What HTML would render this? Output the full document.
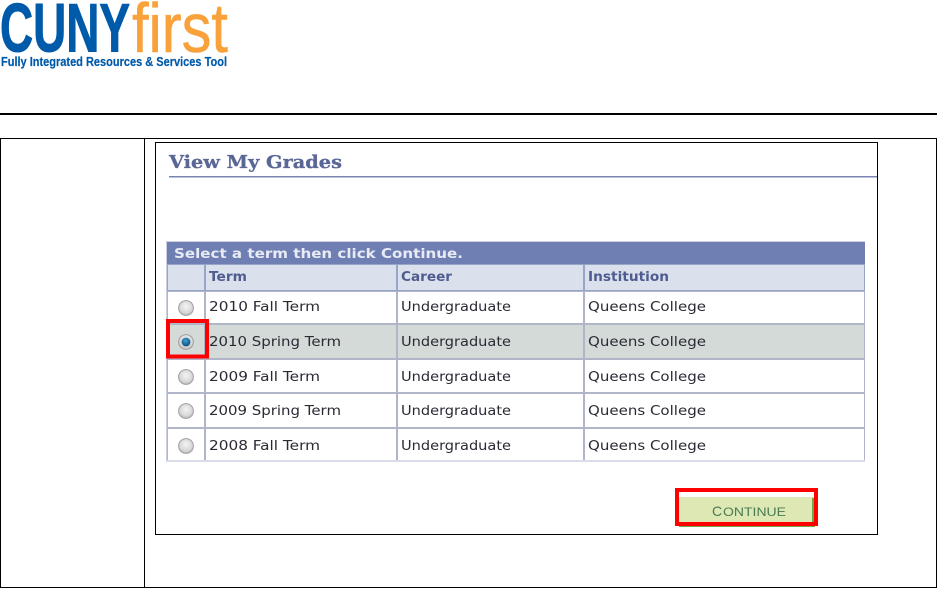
<!DOCTYPE html>
<html><head><meta charset="utf-8"><style>
html,body{margin:0;padding:0;background:#fff;width:937px;height:589px;overflow:hidden}
svg{display:block}
.c{font-family:"DejaVu Sans",sans-serif;font-size:13px;fill:#2a2a35}
.h{font-family:"DejaVu Sans",sans-serif;font-size:13px;font-weight:bold;fill:#4f5b8f}
</style></head><body>
<svg width="937" height="589" viewBox="0 0 937 589" xmlns="http://www.w3.org/2000/svg">
<defs>
<radialGradient id="r" cx="50%" cy="40%" r="60%"><stop offset="0" stop-color="#f4f4f4"/><stop offset="0.7" stop-color="#d8d8d8"/><stop offset="1" stop-color="#b8b8b8"/></radialGradient>
<radialGradient id="b" cx="45%" cy="35%" r="65%"><stop offset="0" stop-color="#3f9fd0"/><stop offset="1" stop-color="#0a4d80"/></radialGradient>
<filter id="s" x="-5%" y="-5%" width="110%" height="110%"><feGaussianBlur stdDeviation="0.3"/></filter>
</defs>
<!-- logo -->
<text x="0" y="51.5" font-family="Liberation Sans" font-weight="bold" font-size="69" fill="#005aaa" stroke="#005aaa" stroke-width="1" textLength="130" lengthAdjust="spacingAndGlyphs">CUNY</text>
<text x="132" y="52" font-family="Liberation Sans" font-size="70" fill="#f9a13a" stroke="#f9a13a" stroke-width="0.5" textLength="96" lengthAdjust="spacingAndGlyphs">first</text>
<text x="1" y="66" font-family="Liberation Sans" font-weight="bold" font-size="12.5" fill="#005aaa" stroke="#005aaa" stroke-width="0.2" textLength="226" lengthAdjust="spacingAndGlyphs">Fully Integrated Resources &amp; Services Tool</text>
<!-- rule -->
<rect x="0" y="113" width="937" height="2" fill="#000"/>
<!-- outer table -->
<rect x="0.5" y="138.5" width="936" height="449" fill="none" stroke="#000"/>
<rect x="144" y="138" width="1" height="450" fill="#000"/>
<!-- inner frame -->
<rect x="155.5" y="142.5" width="722" height="392" fill="none" stroke="#000"/>
<!-- title -->
<text x="169" y="168" font-family="DejaVu Serif,Liberation Serif,serif" font-weight="bold" font-size="18" fill="#5a6796" stroke="#5a6796" stroke-width="0.3" textLength="173" lengthAdjust="spacingAndGlyphs">View My Grades</text>
<rect x="169" y="176" width="708" height="1.5" fill="#7a86b2"/>
<g filter="url(#s)">
<!-- table -->
<rect x="166" y="241" width="699" height="221" fill="#c9cfe0"/>
<rect x="167" y="242" width="698" height="22" fill="#6f7fb3"/>
<text x="174" y="258" font-family="DejaVu Sans" font-weight="bold" font-size="13" fill="#e8ebf4" textLength="289" lengthAdjust="spacingAndGlyphs">Select a term then click Continue.</text>
<rect x="167" y="264" width="698" height="27" fill="#97a5c6"/>
<rect x="168" y="265" width="36" height="25" fill="#dae1ec"/>
<rect x="206" y="265" width="190" height="25" fill="#dae1ec"/>
<rect x="398" y="265" width="185" height="25" fill="#dae1ec"/>
<rect x="585" y="265" width="279" height="25" fill="#dae1ec"/>
<text class="h" x="209" y="281" textLength="38" lengthAdjust="spacingAndGlyphs">Term</text>
<text class="h" x="401" y="281" textLength="51" lengthAdjust="spacingAndGlyphs">Career</text>
<text class="h" x="588" y="281" textLength="81" lengthAdjust="spacingAndGlyphs">Institution</text>
<!-- row backgrounds -->
<rect x="167" y="291" width="698" height="171" fill="#b0b5ca"/>
<rect x="167" y="460" width="698" height="2" fill="#d8dde9"/>
<g fill="#fff">
<rect x="168" y="292" width="36" height="31"/><rect x="206" y="292" width="190" height="31"/><rect x="398" y="292" width="185" height="31"/><rect x="585" y="292" width="279" height="31"/>
</g>
<g fill="#d4dad7">
<rect x="168" y="325" width="36" height="33"/><rect x="206" y="325" width="190" height="33"/><rect x="398" y="325" width="185" height="33"/><rect x="585" y="325" width="279" height="33"/>
</g>
<g fill="#fff">
<rect x="168" y="360" width="36" height="32"/><rect x="206" y="360" width="190" height="32"/><rect x="398" y="360" width="185" height="32"/><rect x="585" y="360" width="279" height="32"/>
<rect x="168" y="394" width="36" height="33"/><rect x="206" y="394" width="190" height="33"/><rect x="398" y="394" width="185" height="33"/><rect x="585" y="394" width="279" height="33"/>
<rect x="168" y="429" width="36" height="31"/><rect x="206" y="429" width="190" height="31"/><rect x="398" y="429" width="185" height="31"/><rect x="585" y="429" width="279" height="31"/>
</g>
<!-- radios -->
<g stroke="#a0a0a0" fill="url(#r)">
<circle cx="186" cy="308" r="7.4"/><circle cx="186" cy="377" r="7.4"/><circle cx="186" cy="411" r="7.4"/><circle cx="186" cy="446" r="7.4"/>
<circle cx="186" cy="342" r="7.4"/>
</g>
<circle cx="186" cy="342" r="4.4" fill="url(#b)"/>
<!-- text rows -->
<text class="c" x="209" y="311" textLength="111" lengthAdjust="spacingAndGlyphs">2010 Fall Term</text>
<text class="c" x="401" y="311" textLength="110" lengthAdjust="spacingAndGlyphs">Undergraduate</text>
<text class="c" x="588" y="311" textLength="118" lengthAdjust="spacingAndGlyphs">Queens College</text>
<text class="c" x="209" y="346" textLength="132" lengthAdjust="spacingAndGlyphs">2010 Spring Term</text>
<text class="c" x="401" y="346" textLength="110" lengthAdjust="spacingAndGlyphs">Undergraduate</text>
<text class="c" x="588" y="346" textLength="118" lengthAdjust="spacingAndGlyphs">Queens College</text>
<text class="c" x="209" y="381" textLength="111" lengthAdjust="spacingAndGlyphs">2009 Fall Term</text>
<text class="c" x="401" y="381" textLength="110" lengthAdjust="spacingAndGlyphs">Undergraduate</text>
<text class="c" x="588" y="381" textLength="118" lengthAdjust="spacingAndGlyphs">Queens College</text>
<text class="c" x="209" y="415" textLength="132" lengthAdjust="spacingAndGlyphs">2009 Spring Term</text>
<text class="c" x="401" y="415" textLength="110" lengthAdjust="spacingAndGlyphs">Undergraduate</text>
<text class="c" x="588" y="415" textLength="118" lengthAdjust="spacingAndGlyphs">Queens College</text>
<text class="c" x="209" y="450" textLength="111" lengthAdjust="spacingAndGlyphs">2008 Fall Term</text>
<text class="c" x="401" y="450" textLength="110" lengthAdjust="spacingAndGlyphs">Undergraduate</text>
<text class="c" x="588" y="450" textLength="118" lengthAdjust="spacingAndGlyphs">Queens College</text>
<!-- button -->
<rect x="679" y="497" width="136" height="30" fill="#dde8b4"/>
<rect x="679" y="525.5" width="136" height="1.5" fill="#6fa84a"/>
<rect x="812" y="498" width="2" height="28" fill="#6fa84a"/>
<text x="712" y="516" font-family="Liberation Sans" font-size="14" fill="#4a7a52">C</text>
<text x="723" y="516" font-family="Liberation Sans" font-size="12" fill="#4a7a52" textLength="63" lengthAdjust="spacingAndGlyphs">ONTINUE</text>
</g>
<!-- red highlight boxes -->
<rect x="168" y="321" width="39" height="35.5" fill="none" stroke="#f00" stroke-width="4"/>
<rect x="677" y="490" width="139" height="34" fill="none" stroke="#f00" stroke-width="4"/>
</svg>
</body></html>
